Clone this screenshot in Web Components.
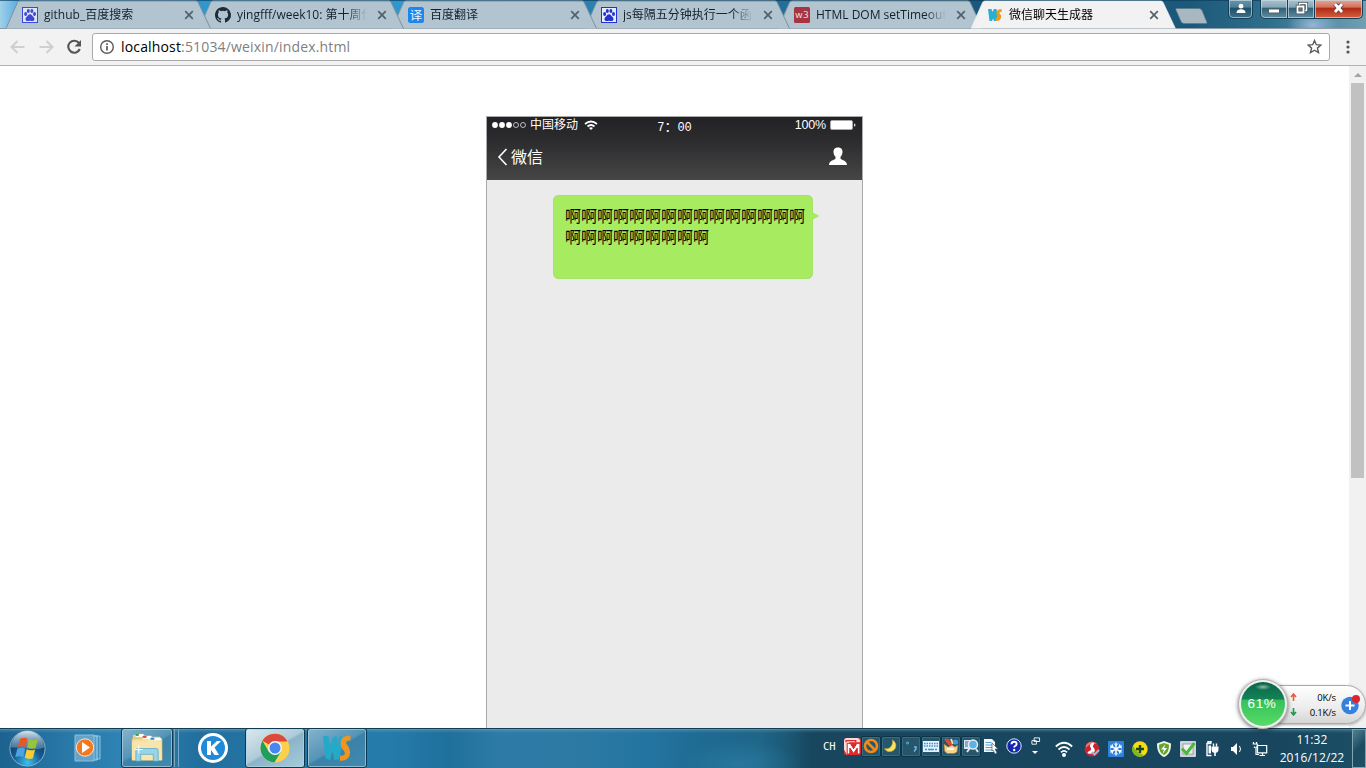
<!DOCTYPE html>
<html lang="zh-CN">
<head>
<meta charset="utf-8">
<title>微信聊天生成器</title>
<style>
html,body{margin:0;height:100%;overflow:hidden}
body{font:12px "Open Sans","Noto Sans CJK SC",sans-serif;color:#000}
</style>
</head>
<body>
<desktop-screen></desktop-screen>
<script>
const define = (name, css, html, setup) => customElements.define(name, class extends HTMLElement {
  connectedCallback() {
    if (this.shadowRoot) return;
    const root = this.attachShadow({ mode: 'open' });
    root.innerHTML = `<style>*{box-sizing:border-box}svg{display:block}${css}</style>${typeof html === 'function' ? html(this) : html}`;
    if (setup) setup(this, root);
  }
});

const paw = (c, bg) => `<rect x=".5" y=".5" width="15" height="15" fill="${bg}" stroke="${c}"/><g fill="${c}"><ellipse cx="3.6" cy="7" rx="1.5" ry="2"/><ellipse cx="6.3" cy="4.1" rx="1.5" ry="2"/><ellipse cx="9.9" cy="4.1" rx="1.5" ry="2"/><ellipse cx="12.5" cy="7" rx="1.5" ry="2"/><path d="M8 7.2c1.600 0 2 1.400 3.300 2.500 1.700 1.400 1.700 4.300-.8 4.300-1 0-1.500-.3-2.500-.3s-1.500.3-2.500.3c-2.500 0-2.500-2.900-.8-4.300C6 8.600 6.400 7.200 8 7.200z"/></g>`;

const icons = {
  paw: [16, paw('#3f49d8', '#dfe6f4')],
  paw2: [16, paw('#2432cf', '#e6ecfa')],
  github: [16, `<path fill="#1b2b38" d="M8 0C3.580 0 0 3.580 0 8c0 3.540 2.290 6.530 5.470 7.590.4.070.55-.17.55-.38v-1.490c-2.010.37-2.530-.49-2.690-.94-.09-.23-.48-.94-.82-1.130-.28-.15-.68-.52-.01-.53.63-.01 1.080.58 1.230.82.72 1.210 1.870.87 2.330.66.070-.52.28-.87.510-1.070-1.780-.2-3.640-.89-3.640-3.950 0-.87.310-1.590.820-2.150-.08-.2-.36-1.020.08-2.120 0 0 .67-.21 2.200.82a7.420 7.420 0 0 1 4 0c1.530-1.040 2.200-.82 2.200-.82.44 1.100.16 1.920.08 2.120.51.56.82 1.270.82 2.150 0 3.070-1.870 3.750-3.650 3.950.29.25.54.73.54 1.480v2.190c0 .21.15.46.55.38A8 8 0 0 0 8 0z"/>`],
  fanyi: [16, `<rect width="16" height="16" rx="2.500" fill="#1b86ee"/><text x="8" y="12.500" font-size="12.500" text-anchor="middle" font-family="Noto Sans CJK SC" fill="#e8f4ff">译</text>`],
  w3: [16, `<rect width="16" height="16" rx="1.500" fill="#a73541"/><text x="8" y="11.300" font-size="9.500" text-anchor="middle" font-family="DejaVu Sans" fill="#ecd7da">w3</text>`],
  ws: [16, `<path d="M1 2h3.500l.8 3L7 2h2.500l.8 4 .7-3.500V9L9.500 14H7l-1-2.500L5 14H2.500z" fill="#28b0d2"/><path d="M14.600 2v3.200c-2-.6-2.800.2-1.700 1.500 2.600 2.800 1.400 7.600-4.400 7.100V11c2.300.2 3.200-.6 2-2-2.400-3-.6-7.200 4.100-7z" fill="#ef981b"/>`],
  wsBig: [32, `<path d="M2 4h5.500l1.800 11L12 5l4-1 1.500 9.500L18.500 4l3 0q-3 6-.5 11l-2.800 12-4.700 1-2-9-2.500 9-4.500-1.500z" fill="#25a9c9"/><path d="M29.500 3.500l-.2 5.300c-4-1-5.500 1-3 4.200 5.500 7 2.800 16.600-7.600 15.800l.5-5.200c4.600.5 6-1.700 3.300-5C17 12 19.500 2.500 29.500 3.500z" fill="#ef941d"/>`],
  start: [40, `<defs><radialGradient id="a" cx=".5" cy=".9" r=".8"><stop offset="0" stop-color="#3fc0ee"/><stop offset=".5" stop-color="#155b91"/><stop offset="1" stop-color="#0c365d"/></radialGradient><linearGradient id="b" x2="0" y2="1"><stop offset="0" stop-color="#d6e5ee"/><stop offset="1" stop-color="#6f9ab7" stop-opacity=".5"/></linearGradient></defs><circle cx="20" cy="20" r="18" fill="url(#a)" stroke="#85b5d2"/><path d="M3 19a17 17 0 0 1 34 0C28 23 14 18 3 19z" fill="url(#b)"/><path d="M12.500 10c2.800-1.500 5.300-1.300 7.500-.2L18 18.500c-2.600-1.200-5-1.200-8 0z" fill="#e9562a"/><path d="M21.500 10.500c2.800 1.300 5.400 1.300 9 .2L28.300 19.500c-2.900 1.200-5.400 1-8.800-.4z" fill="#94c53b"/><path d="M9.600 20c2.900-1.200 5.400-1.200 8 .2L15.600 29c-2.500-1.200-5-1.300-8.200-.1z" fill="#4ba3e0"/><path d="M19.200 20.800c2.800 1.300 5.400 1.300 8.600.1L25.600 30c-3 1.100-5.600.9-8.400-.4z" fill="#fbcb32"/>`],
  media: [28, `<path d="M19 2h7v23h-7z" fill="#3f8fbd" stroke="#8cc6e5"/><path d="M16 2h7v24h-7z" fill="#4f9cc8" stroke="#a5d5ed"/><path d="M1 1h19v26H1z" fill="#65a3c8" stroke="#8cc0dc"/><circle cx="11" cy="13.500" r="8.700" fill="#f4781e" stroke="#fbe6d8"/><path d="M8 8l8 5.500L8 19z" fill="#fff"/>`],
  folder: [34, `<path d="M2 3h12l1 2h15v22H2z" fill="#ecd487"/><path d="M5 2h8v3H5z" fill="#fff"/><path d="M5 2h3v2H5z" fill="#25a93a"/><path d="M1 7h11l2-3h7l1 3h10v22H1z" fill="#f4e0a0" stroke="#cdb161" stroke-width=".6"/><path d="M12 4h9v3h-9z" fill="#fff"/><path d="M12 4h4v2h-4z" fill="#d9472d"/><path d="M19 6h12v3H19z" fill="#fff"/><path d="M20 6h4v2h-4z" fill="#2f8de0"/><path d="M1 10h14l3-1.500h13L32 29H1z" fill="#f8e5ab"/><path d="M5 30V19q0-2 2-2h19q2 0 2 2v11h-5v-7H10v7z" fill="#97d4ea" stroke="#56a8c8" stroke-width=".8"/><path d="M8 14v8M4 18h8" stroke="#fff"/>`],
  kugou: [32, `<circle cx="16" cy="16" r="15" fill="#fff"/><circle cx="16" cy="16" r="12" fill="#218ad8"/><path d="M10 9h4v5.500L20 9h4l-6.500 6.500L22 23h-4.500l-3.500-5v5h-4z" fill="#fff"/>`],
  chrome: [32, `<circle cx="16" cy="16" r="14.500" fill="#fdd04b"/><path d="M16 16L3.450 8.750A14.500 14.500 0 0 1 28.600 9.500H16z" fill="#dc4a3d"/><path d="M3.450 8.750A14.500 14.500 0 0 0 15.400 30.500L22 19.500 16 16 9.700 19.500z" fill="#1f9f5b"/><circle cx="16" cy="16" r="7" fill="#f4f6f7"/><circle cx="16" cy="16" r="5.500" fill="#4688f0"/>`],
  mcafee: [16, `<rect width="16" height="16" rx="2" fill="#e02a2c"/><path d="M0 11V3q0-3 3-3h9q3 0 3 3v1H5L3 16z" fill="#f9dcdb"/><path d="M2 4V2.500h9V4" fill="none" stroke="#dc2b2d" stroke-width="1.300"/><path d="M3 15V5h3l3 5 3-5h3v10h-2.500V9.500L9 14.500 5.500 9.500V15z" fill="#fff" stroke="#cf1c1e" stroke-width=".9"/>`],
  ban: [16, `<circle cx="8" cy="8" r="6" fill="none" stroke="#ef8a1d" stroke-width="2.600"/><path d="M4 4l8 8" stroke="#ef8a1d" stroke-width="2.600"/>`],
  moon: [16, `<path d="M9.500 2c5 3 4.500 10-1.500 11.500-3 .6-5.500-.8-6.500-3 4.500 1.500 9-2.500 8-8.500z" fill="#fce463" stroke="#d2a52a" stroke-width=".6"/>`],
  comma: [16, `<circle cx="4.500" cy="5" r="1" fill="#24566c" stroke="#77b7ef" stroke-width=".9"/><path d="M11 9h2v2l-2 2.500" stroke="#77b7ef" fill="none" stroke-width="1.400"/>`],
  keyboard: [16, `<rect y="3" width="16" height="11" fill="#e4f2fc"/><path d="M1 5.500h14M1 8h14" stroke="#3a8fd8" stroke-width="1.500" stroke-dasharray="1.500 1"/><path d="M2 11.500h12" stroke="#3a8fd8" stroke-width="1.300" stroke-dasharray="2 1 6 1"/>`],
  toolbox: [16, `<path d="M2 1l5 6M4 1l5 6" stroke="#e04937" stroke-width="2"/><path d="M8 1l2 5" stroke="#f6e1a9" stroke-width="2"/><circle cx="12.500" cy="4" r="2.600" fill="#4e94d4"/><path d="M1 6l4 3 4-2 3 2 3-2-1 7-3 1.500H4L1.500 13z" fill="#f5d491" stroke="#a57427" stroke-width=".6"/><path d="M4 11h7" stroke="#fff5d8" stroke-width="2"/>`],
  search: [16, `<path d="M1 2h6v9H1z" fill="#d7e6f2"/><path d="M2 4h4M2 6h4M2 8h3" stroke="#446e8d"/><circle cx="10" cy="6.500" r="4.500" fill="#5fb0e4" stroke="#e2edf5" stroke-width="1.500"/><path d="M7 10l-3 4M13 11l2 3" stroke="#dce7ef" stroke-width="2"/>`],
  page: [16, `<path d="M1 1h8l3 3v10H1z" fill="#f1f7fb"/><path d="M2.500 4.500h6M2.500 7h7M2.500 9.500h7M2.500 12h7" stroke="#5ba0d0"/><path d="M9 5l6 6-3 0 2 4-2 1-2-4-1 1z" fill="#fff" stroke="#455e70" stroke-width=".7"/>`],
  help: [16, `<circle cx="8" cy="8" r="7.200" fill="#1529ad" stroke="#dce5f6" stroke-width="1"/><path d="M5.500 6.200q0-2.500 2.600-2.500t2.500 2.300q0 1.300-1.500 2-.9.500-.9 1.500" fill="none" stroke="#fff" stroke-width="1.900"/><circle cx="8.200" cy="12" r="1.200" fill="#fff"/>`],
  wifi: [18, `<g fill="none" stroke="#fff" stroke-width="1.700"><path d="M.8 6.500q8.200-7.500 16.400 0M3.500 9.500q5.500-5 11 0M6 12.300q3-2.700 6 0"/></g><circle cx="9" cy="15" r="2" fill="#fff"/>`],
  redball: [16, `<circle cx="8" cy="8" r="7.500" fill="#c9242e"/><path d="M2 4a7 7 0 0 1 11-1Q6 2 2 7z" fill="#e4777c"/><path d="M9 1.500c3 1.500-1.500 3 .5 5s2 5-2 6-5-1-3-2 3.500-1.500 2-4 .5-4 2.500-5z" fill="#fff"/><path d="M8 11l2.500 2.500L15 9" stroke="#8fb9e6" stroke-width="2.200" fill="none"/>`],
  snow: [16, `<rect width="16" height="16" rx="1" fill="#2d82dc"/><path d="M8 1.500v13M2.400 4.700l11.200 6.600M13.600 4.700L2.400 11.300" stroke="#fff" stroke-width="1.400"/><path d="M6 2.500l2 2 2-2M6 13.500l2-2 2 2M2 7l2.800-1L4.200 3.200M14 9l-2.800 1 .6 2.800M14 7l-2.800-1 .6-2.800M2 9l2.800 1-.6 2.800" fill="none" stroke="#fff" stroke-width="1"/>`],
  plus: [16, `<circle cx="8" cy="8" r="7.700" fill="#f6dc16"/><path d="M3 14A7.500 7.500 0 0 1 1 5q4 7 11 9-5 3-9 0z" fill="#7cba1d"/><path d="M8 4v8M4 8h8" stroke="#16481b" stroke-width="2.400"/>`],
  shield: [16, `<path d="M8 0l7 2.500C15 10 13 14 8 16 3 14 1 10 1 2.500z" fill="#f0f5e9"/><path d="M8 2l5 1.800C13 9.500 11.500 12.500 8 14 4.500 12.500 3 9.500 3 3.800z" fill="#64a42a"/><path d="M9.500 3L5 8.500h3L6.500 13 11 7H8z" fill="#fff"/>`],
  check: [16, `<rect x=".7" y=".7" width="14.600" height="14.600" fill="#c9cfd3" stroke="#e8ecee"/><rect x="3" y="3" width="10" height="10" fill="#eef1f2" stroke="#8e989e" stroke-width=".8"/><path d="M2 7.500l4.500 5L14.500 2" stroke="#4cb838" stroke-width="3" fill="none"/>`],
  power: [16, `<path d="M7.500 14.500H3V2.500h4.500M4 2V.8h3V2" fill="none" stroke="#fff" stroke-width="1.400"/><path d="M4.500 4.500H7v8H4.500zM7.500 5.500h7v3q0 3-2.700 3.200V15h-1.600v-3.300Q7.500 11.500 7.500 8z" fill="#fff"/><path d="M9.500 2.500v3M12.500 2.500v3" stroke="#fff" stroke-width="1.400"/>`],
  volume: [16, `<path d="M3 6h2l4-4v12l-4-4H3z" fill="#fff"/><path d="M11.500 5q2 3 0 6" fill="none" stroke="#fff"/>`],
  network: [16, `<path d="M5.500 4.500h9.200v7.300H5.500zM7.500 14.500h5.500M10.500 12v2.500" fill="#17465e" stroke="#fff" stroke-width="1.200"/><path d="M1.500 1v2.500M4.500 1v2.500M.7 3h4.600v2.500L4 6.500v7h3M2.500 7V5.500" fill="none" stroke="#fff" stroke-width="1.200"/>`],
  restore: [10, `<path d="M3.500 1h6v4h-6zM1 4h5v4H1z" fill="#17465e" stroke="#fff"/>`]
};

define('ui-icon', ':host{display:block;flex:none}svg{overflow:visible}', el => {
  const [n, body] = icons[el.getAttribute('name')];
  const s = el.getAttribute('size') || n;
  return `<svg width="${s}" height="${s}" viewBox="0 0 ${n} ${n}">${body}</svg>`;
});

define('browser-tab', `
:host{display:block;position:relative;flex:none;width:205px;height:28px;margin-right:-12px;color:#14212b}
.shape{position:absolute;inset:0}
.row{position:relative;display:flex;align-items:center;height:28px;padding:2px 0 0 16px}
.t{width:130px;margin-left:6px;white-space:nowrap;overflow:hidden;font-size:12px;line-height:18px;-webkit-mask-image:linear-gradient(90deg,#000 84%,transparent)}
.x{margin-left:10px}
:host([active]){color:#000;height:29px}
`, el => {
  const a = el.hasAttribute('active');
  return `<svg class="shape" width="206" height="30" viewBox="0 0 206 30"><path d="M0 28.500L11.500 2.500Q12.200 1 14 1H190Q191.500 1 192.200 2.500L204.500 28.500" fill="${a ? '#f2f2f2' : '#b1c4d0'}" stroke="${a ? '#e9eff3' : '#7e929e'}" stroke-width="${a ? .6 : 1}"/></svg>
<div class="row"><ui-icon name="${el.getAttribute('icon')}"></ui-icon><div class="t"><slot></slot></div><svg class="x" width="10" height="10" viewBox="0 0 10 10"><path d="M1.200 1.200l7.600 7.600M8.800 1.200L1.200 8.800" stroke="#53616b" stroke-width="1.700"/></svg></div>`;
});

define('window-controls', `
:host{display:flex;align-items:flex-start;height:19px}
.b{height:19px;border:1px solid #153f54;border-top:0;display:flex;align-items:center;justify-content:center;padding-bottom:2px;background:linear-gradient(#a9c1ce,#84a6b6 40%,#315f75 45%,#5e8ea2);box-shadow:inset 0 0 0 1px #c8dce4aa}
.user{width:25px;border-radius:0 0 5px 5px;margin-right:7px;background:linear-gradient(#6b95aa,#4a7d95 40%,#1e5069 45%,#3c7189)}
.min{width:28px;border-radius:0 0 0 5px}.max{width:27px;border-left:0}.close{width:48px;border-left:0;border-radius:0 0 5px 0;background:linear-gradient(#e5a795,#d2705a 40%,#b02a14 45%,#d65f40)}
`, `
<div class="b user"><svg width="10" height="11"><circle cx="5" cy="3.200" r="2.400" fill="#fff"/><path d="M.5 10q0-3.700 4.500-3.700T9.500 10z" fill="#fff"/></svg></div>
<div class="b min"><svg width="12" height="12"><rect x=".5" y="7" width="11" height="4" fill="#fff" stroke="#54626c"/></svg></div>
<div class="b max"><svg width="13" height="13"><path d="M4.500 1.500h7v7h-7z" fill="none" stroke="#46545e" stroke-width="3"/><path d="M4.500 1.500h7v7h-7z" fill="none" stroke="#fff" stroke-width="1.500"/><path d="M2.500 4.500h6v6h-6z" fill="#5f7e8f" stroke="#46545e" stroke-width="3.400"/><path d="M2.500 4.500h6v6h-6z" fill="none" stroke="#fff" stroke-width="1.800"/></svg></div>
<div class="b close"><svg width="13" height="12"><path d="M3 2l7 8M10 2l-7 8" stroke="#5c3d42" stroke-width="4.600"/><path d="M3 2l7 8M10 2l-7 8" stroke="#fff" stroke-width="2.900"/></svg></div>`);

define('tab-strip', `
:host{display:flex;height:29px;padding-left:6px;background:linear-gradient(#0a3d5c,transparent 1.500px),radial-gradient(ellipse 26px 16px at 1313px 25px,#93b6d6,transparent),linear-gradient(90deg,#a0d0ea 0,#58ade0 18px,#2f96d0 200px,#2f97cf 400px,#2880ae 600px,#226d96 800px,#19587c 980px,#1c587a 1190px,#2f6f8c 1270px,#6fa0b4);position:relative;border-bottom:1px solid #8b9ba5}
browser-tab:nth-of-type(1){z-index:5}browser-tab:nth-of-type(2){z-index:4}browser-tab:nth-of-type(3){z-index:3}browser-tab:nth-of-type(4){z-index:2}browser-tab:nth-of-type(5){z-index:1}browser-tab[active]{z-index:6}
.new{margin:8px 0 0 11px}
window-controls{margin-left:auto;margin-right:3px}
`, `
<browser-tab icon="paw">github_百度搜索</browser-tab><browser-tab icon="github">yingfff/week10: 第十周作业</browser-tab><browser-tab icon="fanyi">百度翻译</browser-tab><browser-tab icon="paw2">js每隔五分钟执行一个函数</browser-tab><browser-tab icon="w3">HTML DOM setTimeout</browser-tab><browser-tab active icon="ws">微信聊天生成器</browser-tab>
<svg class="new" width="34" height="16"><path d="M1 .5h23q2 0 3 2l5 12q0 1-1 1H9q-2 0-3-2L1 2q-.5-1.500 0-1.500z" fill="#a9b8c0" stroke="#557788" stroke-width=".6"/></svg>
<window-controls></window-controls>`);

define('address-bar', `
:host{display:flex;align-items:center;height:37px;padding:0 16px 0 9px;background:#f2f2f2;border-bottom:1px solid #b3b3b3}
.nav{display:flex;width:83px;gap:11px;align-items:center}
.box{flex:1;height:28px;margin-top:-1px;display:flex;align-items:center;background:#fff;border:1px solid #a9a9a9;border-radius:3px;padding:0 7px 0 6px}
.url{margin-left:6px;font-size:14px;line-height:20px;color:#808080;flex:1;letter-spacing:.16px}
.url b{font-weight:400;color:#000}
.menu{margin-left:16px}
`, `
<div class="nav">
<svg width="17" height="16" viewBox="0 0 17 16"><path d="M15.500 8H3M8.500 2L2.500 8l6 6" fill="none" stroke="#cfcfcf" stroke-width="2"/></svg>
<svg width="17" height="16" viewBox="0 0 17 16"><path d="M2.500 8H15M9.500 2l6 6-6 6" fill="none" stroke="#cfcfcf" stroke-width="2"/></svg>
<svg width="17" height="16" viewBox="0 0 17 16"><path d="M14 4A6 6 0 1 0 14.800 10" fill="none" stroke="#555" stroke-width="2.100"/><path d="M16 1v6.500H9.500z" fill="#555"/></svg>
</div>
<div class="box"><svg width="16" height="16"><circle cx="8" cy="8" r="6.300" fill="none" stroke="#5a5a5a" stroke-width="1.400"/><path d="M8 7v4.500M8 4.200v1.800" stroke="#5a5a5a" stroke-width="1.700"/></svg>
<div class="url"><b>localhost</b>:51034/weixin/index.html</div>
<svg width="15" height="15" viewBox="0 0 15 15"><path d="M7.500 1.500l1.800 4.200 4.600.4-3.500 3 1.100 4.500-4-2.400-4 2.400 1.100-4.500-3.500-3 4.600-.4z" fill="none" stroke="#5a5a5a" stroke-width="1.400"/></svg></div>
<svg class="menu" width="4" height="14"><g fill="#555"><circle cx="2" cy="2" r="1.600"/><circle cx="2" cy="7" r="1.600"/><circle cx="2" cy="12" r="1.600"/></g></svg>`);

define('phone-header', `
:host{display:flex;flex-direction:column;height:63px;background:linear-gradient(#222126,#2d2d2f 40%,#464646);color:#fff}
.status{display:grid;grid-template-columns:1fr auto 1fr;height:16px;font:12px/14px "Liberation Sans","Noto Sans CJK SC",sans-serif}
.l{display:flex;align-items:center;padding-left:5px;height:15px}
.l span{margin:0 6px 0 4px}
.clock{font-family:"Liberation Mono","Noto Sans CJK SC",monospace;line-height:21px;font-size:12px;white-space:nowrap}
.clock i{font-style:normal;font-size:13px}
.r{display:flex;align-items:center;justify-content:flex-end;padding-right:6px;gap:4px;font-size:12.500px;letter-spacing:-.2px;height:15px}
.bar{display:flex;align-items:center;justify-content:space-between;padding:0 14px 0 10px;flex:1;height:47px}
.back{display:flex;align-items:center;gap:3px;font:16px/24px "Noto Sans CJK SC",sans-serif}
.back span{margin-top:-2px}
`, `
<div class="status"><div class="l"><svg width="34" height="8"><g fill="#fff"><circle cx="3" cy="4" r="2.900"/><circle cx="10" cy="4" r="2.900"/><circle cx="17" cy="4" r="2.900"/></g><g fill="none" stroke="#ddd" stroke-width=".8"><circle cx="24" cy="4" r="2.500"/><circle cx="31" cy="4" r="2.500"/></g></svg><span>中国移动</span><svg width="14" height="10" viewBox="0 0 14 10"><g fill="none" stroke="#fff" stroke-width="1.700"><path d="M1 4q6-5 12 0M3.500 6.500q3.500-3 7 0"/></g><path d="M5 8q2-1.600 4 0L7 10z" fill="#fff"/></svg></div>
<div class="clock">7<i>：</i>00</div>
<div class="r">100%<svg width="26" height="10"><rect x=".5" y=".5" width="22" height="9" rx="1.500" fill="#fff" stroke="#aaa"/><path d="M24 3.500q1.500 0 1.500 1.500T24 6.500z" fill="#ddd"/></svg></div></div>
<div class="bar"><div class="back"><svg width="11" height="18"><path d="M9.500 1L2 9l7.500 8" fill="none" stroke="#fff" stroke-width="1.600"/></svg><span>微信</span></div>
<svg width="20" height="19" viewBox="0 0 20 19"><path d="M10 .5c3.500 0 4.700 2.300 4.500 5-.2 2-1 3.200-2 4.200v2c1.500 1.500 6.500 2 6.500 6.300H1c0-4.300 5-4.800 6.500-6.300v-2c-1-1-1.800-2.200-2-4.200C5.300 2.800 6.500.5 10 .5z" fill="#fff"/></svg></div>`);

define('chat-bubble', `
:host{display:block;position:relative;width:260px;height:84px;border-radius:6px;background:#a6eb60;box-shadow:inset 0 0 0 1px #a4e26a;padding:10px 8px 0 12px;font:16px/21px "Noto Sans CJK SC",sans-serif;word-break:break-all}
svg{position:absolute;left:259px;top:17px}
`, `<slot></slot><svg width="8" height="8"><path d="M0 0l7.500 4L0 8z" fill="#a6eb60"/></svg>`);

define('phone-frame', `
:host{display:flex;flex-direction:column;width:377px;height:100%;border:1px solid #aaa;border-bottom:0;background:#ebebeb}
.chat{display:flex;justify-content:flex-end;padding:15px 49px 0 0}
`, `<phone-header></phone-header><div class="chat"><slot></slot></div>`);

define('scroll-bar', `
:host{display:flex;flex-direction:column;align-items:center;width:17px;background:#f1f1f1}
svg{margin:7px 0 6px}.thumb{width:13px;height:395px;background:#c1c1c1}
`, `<svg width="8" height="4"><path d="M4 0l4 4H0z" fill="#a3a3a3"/></svg><div class="thumb"></div>`);

define('web-page', `
:host{display:flex;height:662px;background:#fff}
.main{flex:1;padding:50px 0 0 486px}
`, `<div class="main"><phone-frame><chat-bubble>啊啊啊啊啊啊啊啊啊啊啊啊啊啊啊啊啊啊啊啊啊啊啊啊</chat-bubble></phone-frame></div><scroll-bar></scroll-bar>`);

define('speed-widget', `
:host{display:flex;align-items:center;position:absolute;left:1238px;top:679px;height:50px;width:128px;font:9.500px/15px "Open Sans",sans-serif;letter-spacing:-.15px;color:#000}
.pill{position:absolute;left:24px;top:6px;width:104px;height:39px;border:1px solid #aaa;border-radius:0 20px 20px 0;background:linear-gradient(#fff,#ececec 60%,#d5d5d5);box-shadow:0 1px 3px #0005;display:flex;align-items:center;padding-left:27px}
.ball{position:relative;width:50px;height:50px;border-radius:50%;border:1px solid #b5b5b5;background:#f0f0f0;box-shadow:0 1px 4px #0008;padding:2px}
.in{width:44px;height:44px;border-radius:50%;background:radial-gradient(ellipse 8px 3px at 50% 5px,#fff8,transparent),linear-gradient(#0a6548,#158257 39%,#36c05a 41%,#58dc68);display:flex;align-items:center;justify-content:center;color:#fff;font:13.500px "Liberation Sans",sans-serif;letter-spacing:.6px;padding:0 2px 1px 0}
.arrows{display:flex;flex-direction:column;gap:7px}
.v{width:39px;text-align:right}
.plus{margin-left:5px}
`, `<div class="pill"><div class="arrows"><svg width="7" height="8"><path d="M3.500 8V2M1 4l2.500-3L6 4" stroke="#ed5a3a" stroke-width="1.600" fill="none"/></svg><svg width="7" height="8"><path d="M3.500 0v6M1 4l2.500 3L6 4" stroke="#199b4a" stroke-width="1.600" fill="none"/></svg></div><div class="v">0K/s<br>0.1K/s</div><svg class="plus" width="20" height="22" viewBox="0 0 20 22"><circle cx="9" cy="11.500" r="8.700" fill="#3481de"/><path d="M9 7v9M4.500 11.500h9" stroke="#fff" stroke-width="2"/><circle cx="15" cy="5" r="4" fill="#d8282d"/></svg></div><div class="ball"><div class="in">61%</div></div>`);

define('task-button', `
:host{display:flex;align-items:center;justify-content:center;flex:none;width:60px;height:40px}
:host([open]){border:1px solid #0e3953;border-radius:3px;box-shadow:inset 0 0 0 1px #b4d3e3aa;background:linear-gradient(150deg,#86b3cb 0,#5594b6 48%,#3a82a9 52%,#4389af)}
:host([active]){background:linear-gradient(150deg,#dce8ee 0,#aecbda 48%,#8cb4c8 52%,#a5cddd)}
`, el => `<ui-icon name="${el.getAttribute('icon')}" size="${el.getAttribute('size') || 32}"></ui-icon>`);

define('system-tray', `
:host{display:flex;align-items:center;height:40px;color:#fff}
.ch{font:10.500px "DejaVu Sans Mono",monospace;width:21px;margin-top:-5px}
.ime{display:flex;align-items:center;margin-top:-4px;height:22px}
.cell{width:20px;height:21px;display:flex;align-items:center;justify-content:center;border:1px solid #0e3447;border-radius:2px;background:#24566c;box-shadow:inset 0 0 0 1px #386c82}
.mini{margin:-6px 0 0 8px;display:flex;flex-direction:column;align-items:center;gap:5px;width:10px}
.sys{display:flex;align-items:center;gap:8px;margin-left:15px;margin-top:1px}
.clock{font-size:12px;line-height:18px;text-align:center;width:70px;margin-left:9px;white-space:nowrap;margin-top:1px;letter-spacing:.1px}
.peek{width:14px;height:39px;border:1px solid #7fa4b2;margin-left:5px;margin-top:1px;background:linear-gradient(135deg,#537f91,#1c4c60 50%,#214f64)}
`, `
<div class="ch">CH</div><div class="ime"><ui-icon name="mcafee" size="17"></ui-icon>
${['ban','moon','comma','keyboard','toolbox','search'].map(n => `<div class="cell"><ui-icon name="${n}"></ui-icon></div>`).join('')}
<ui-icon name="page" style="margin-left:2px"></ui-icon><ui-icon name="help" style="margin-left:7px"></ui-icon></div>
<div class="mini"><ui-icon name="restore" size="9"></ui-icon><svg width="6" height="3"><path d="M0 0h6L3 3z" fill="#fff"/></svg></div>
<div class="sys"><ui-icon name="wifi"></ui-icon><ui-icon name="redball" style="margin-left:3px"></ui-icon>${['snow','plus','shield','check','power','volume','network'].map(n => `<ui-icon name="${n}"></ui-icon>`).join('')}</div>
<div class="clock">11:32<br>2016/12/22</div><div class="peek"></div>`);

define('task-bar', `
:host{display:flex;height:40px;background:linear-gradient(#123d56 0,#123d56 1px,#8ab2c6aa 1px,#8ab2c644 2px,transparent 5px),radial-gradient(ellipse 60px 24px at 740px 36px,#2f80aa99,transparent),linear-gradient(90deg,#1d628f 0,#2979a9 70px,#2d83b3 120px,#226f9e 200px,#257caa 385px,#20709c 450px,#2d7ba6 500px,#2c7aa4 580px,#2474a1 650px,#1e6b93 700px,#1f6687 760px,#1c5a78 785px,#17465e 812px,#17465e 1280px,#1c5066);padding-left:7px}
.stack{width:2px;height:38px;margin-top:1px;border-right:1px solid #78a9c4;flex:none;margin-right:2px}
system-tray{margin-left:auto}
`, `
<task-button icon="start" size="39" style="width:40px"></task-button>
<task-button icon="media" size="28" style="width:74px;padding-left:8px"></task-button>
<task-button icon="folder" size="33" open style="width:52px"></task-button><div class="stack"></div><div class="stack"></div>
<task-button icon="kugou" style="width:64px"></task-button>
<task-button icon="chrome" open active></task-button>
<task-button icon="wsBig" open style="margin-left:2px"></task-button>
<system-tray></system-tray>`);

define('desktop-screen', `:host{display:block;position:relative;width:1366px;height:768px;overflow:hidden}`,
`<tab-strip></tab-strip><address-bar></address-bar><web-page></web-page><task-bar></task-bar><speed-widget></speed-widget>`);
</script>
</body>
</html>
